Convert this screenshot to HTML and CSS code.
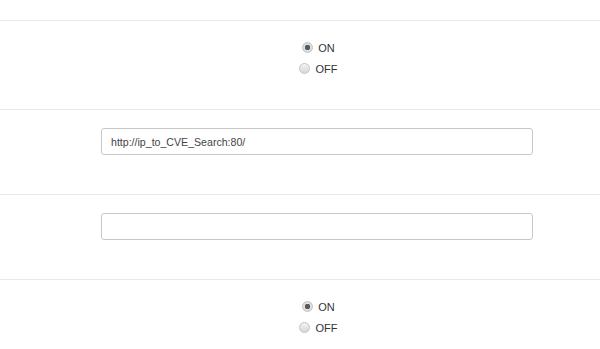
FILE: index.html
```html
<!DOCTYPE html>
<html lang="en">

<head>
    <meta charset="UTF-8">
    <title>Settings</title>
    <link rel="stylesheet" href="styles.css">
</head>

<body>
    <div class="settings">
        <div class="row row-top"></div>
        <div class="row row-radio">
            <label class="radio"><input type="radio" name="r1" checked> ON</label>
            <label class="radio"><input type="radio" name="r1"> OFF</label>
        </div>
        <div class="row row-input">
            <input type="text" class="form-control" value="http://ip_to_CVE_Search:80/">
        </div>
        <div class="row row-input">
            <input type="text" class="form-control" value="">
        </div>
        <div class="row row-radio">
            <label class="radio"><input type="radio" name="r2" checked> ON</label>
            <label class="radio"><input type="radio" name="r2"> OFF</label>
        </div>
    </div>
</body>

</html>
```
FILE: styles.css
```css
* {
    margin: 0;
    padding: 0;
    box-sizing: border-box;
}

body {
    font-family: "Liberation Sans", Arial, sans-serif;
    font-size: 11px;
    color: #333;
    background: #fff;
    overflow: hidden;
}

.row {
    border-top: 1px solid #eaeaea;
}

.row-top {
    height: 20px;
    border-top: none;
}

.row-radio {
    padding: 17px 0 29px 37px;
    text-align: center;
}

.row-input {
    padding: 18px 0 39px 101px;
}

.radio {
    display: block;
    height: 21px;
    line-height: 21px;
}

.radio input {
    appearance: none;
    -webkit-appearance: none;
    width: 11px;
    height: 11px;
    border-radius: 50%;
    border: 1px solid #c4c4c4;
    background: linear-gradient(#f4f4f4, #d6d6d6);
    vertical-align: -1px;
    margin-right: 2px;
}

.radio input:checked {
    background: radial-gradient(circle, #5a5a5a 0, #5a5a5a 2.5px, #e2e2e2 3px, #d0d0d0 100%);
}

.form-control {
    display: block;
    width: 432px;
    height: 27px;
    padding: 0 9px;
    border: 1px solid #c8c8c8;
    border-radius: 3px;
    font-family: "Liberation Sans", Arial, sans-serif;
    font-size: 10.6px;
    color: #444;
    outline: none;
}
```
